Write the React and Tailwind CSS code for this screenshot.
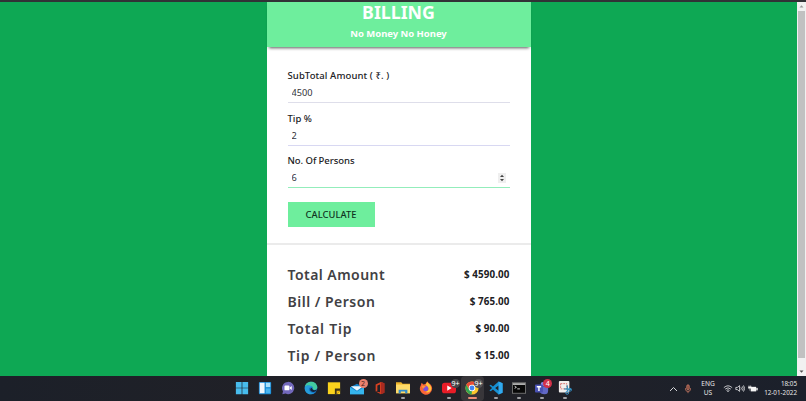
import React, { useState } from 'react';

//=================================================================
// 1. Main page
//=================================================================
function App() {
  return (
    <div className="flex h-[401px] w-[806px] flex-col overflow-hidden bg-[#0ea854] font-['Noto_Sans','Open_Sans',sans-serif]">
      <div className="h-[2px] shrink-0 bg-[#313236]" />
      <div className="flex h-[374px] shrink-0">
        <main className="flex flex-1 justify-center">
          <BillCard />
        </main>
        <Scrollbar />
      </div>
      <Taskbar />
    </div>
  );
}

//=================================================================
// 2. Bill calculator
//=================================================================
function BillCard() {
  const [amount, setAmount] = useState('4500');
  const [tip, setTip] = useState('2');
  const [persons, setPersons] = useState('6');
  const [result, setResult] = useState({ bill: 4500, tip: 90, persons: 6 });

  const calculate = (e) => {
    e.preventDefault();
    const bill = Number(amount);
    setResult({ bill, tip: (bill * Number(tip)) / 100, persons: Number(persons) || 1 });
  };

  const total = result.bill + result.tip;
  const rows = [
    { name: 'Total Amount', value: total, style: 'tracking-[0.45px]' },
    { name: 'Bill / Person', value: total / result.persons, style: 'tracking-[0.5px]' },
    { name: 'Total Tip', value: result.tip, style: 'tracking-[0.78px]' },
    { name: 'Tip / Person', value: result.tip / result.persons, style: 'tracking-[0.65px]' },
  ];

  return (
    <div className="h-full w-[264px] bg-white">
      <header className="flex h-[45px] flex-col items-center bg-[#6eee9d] text-white shadow-[0_3px_3px_-2px_rgba(0,0,0,0.65)]">
        <h1 className="text-[17.8px] leading-[20px] font-bold">BILLING</h1>
        <p className="mt-[5px] text-[9.5px] leading-[14px] font-bold tracking-[-0.03px]">No Money No Honey</p>
      </header>

      <form onSubmit={calculate} className="h-[198px] border-b-2 border-[#ebebeb] px-[21px] pt-[21px]">
        <Field
          label="SubTotal Amount ( ₹. )"
          value={amount}
          onChange={setAmount}
          line="bg-[#dedeea]"
          spacing="tracking-[0.1px]"
        />
        <Field label="Tip %" value={tip} onChange={setTip} line="bg-[#d8d8f2]" spacing="tracking-[0px]" />
        <Field
          label="No. Of Persons"
          value={persons}
          onChange={setPersons}
          line="bg-[#93edbb]"
          spacing="tracking-[-0.06px]"
          spinner
        />
        <button
          type="submit"
          className="mt-[6.5px] block h-[25px] w-[87px] bg-[#6eee9d] pt-[1px] text-[9.3px] font-medium tracking-[0.05px] text-[#10331f]"
        >
          CALCULATE
        </button>
      </form>

      <div className="px-[21px] pt-[16px]">
        {rows.map((row) => (
          <div key={row.name} className="flex h-[27.1px] items-center justify-between">
            <span className={`text-[14px] font-semibold text-[#414144] ${row.style}`}>{row.name}</span>
            <span className="pt-[2px] text-[9.8px] font-bold tracking-[0.11px] text-[#202023]">
              $ {row.value.toFixed(2)}
            </span>
          </div>
        ))}
      </div>
    </div>
  );
}

function Field({ label, value, onChange, line, spacing, spinner }) {
  return (
    <label className="block h-[42.5px]">
      <span className={`block text-[9.5px] leading-[16px] font-medium text-[#202023] ${spacing}`}>{label}</span>
      <span className="flex h-[18px] items-center px-[4px]">
        <input
          type="text"
          value={value}
          onChange={(e) => onChange(e.target.value)}
          className="min-w-0 flex-1 bg-transparent text-[9.2px] leading-[14px] text-[#33333a] outline-none"
        />
        {spinner && (
          <svg viewBox="0 0 8 10" className="h-[10px] w-[8px]">
            <rect width="8" height="10" fill="#efefef" />
            <path d="M2 4 4 1.8 6 4zM2 6 4 8.2 6 6z" fill="#444" />
          </svg>
        )}
      </span>
      <span className={`block h-[1px] ${line}`} />
    </label>
  );
}

function Scrollbar() {
  return (
    <div className="flex w-[9px] flex-col items-center bg-[#f1f1f1]">
      <svg viewBox="0 0 9 9" className="h-[9px] w-[9px]">
        <path d="M2.5 5.5 4.5 3.3 6.5 5.5z" fill="#999" />
      </svg>
      <div className="h-[347px] w-[7px] bg-[#c1c1c1]" />
      <svg viewBox="0 0 9 9" className="mt-auto h-[9px] w-[9px]">
        <path d="M2.5 3.5 4.5 5.8 6.5 3.5z" fill="#505050" />
      </svg>
    </div>
  );
}

//=================================================================
// 3. Windows taskbar
//=================================================================
function Taskbar() {
  return (
    <footer className="flex h-[25px] shrink-0 items-center bg-gradient-to-r from-[#1c2029] via-[#222126] to-[#1b202b] text-[#e8e8e8]">
      <div className="ml-[230px] flex h-full">
        {apps.map((app) => (
          <div
            key={app.name}
            title={app.name}
            className={`relative flex h-full w-[23.1px] items-center justify-center pb-[1px] ${app.active ? 'rounded bg-[#38363a]' : ''}`}
          >
            <svg viewBox="0 0 16 16" className="h-[14px] w-[14px]">{app.icon}</svg>
            {app.badge && (
              <span className={`absolute top-[3px] right-[1px] flex h-[9px] min-w-[9px] items-center justify-center rounded-full text-[7px] leading-none ${app.badgeStyle}`}>
                {app.badge}
              </span>
            )}
            {app.open && <i className="absolute bottom-[2px] h-[2px] w-[4px] rounded bg-[#a0a0a4]" />}
            {app.active && <i className="absolute bottom-[2px] h-[2px] w-[9px] rounded bg-[#ef8e75]" />}
          </div>
        ))}
      </div>

      <div className="ml-auto flex items-center pr-[9px]">
        <svg viewBox="0 0 9 8" className="h-[8px] w-[9px]" fill="none" stroke="#d5d5d8">
          <path d="M1 6 4.5 2.5 8 6" />
        </svg>
        <svg viewBox="0 0 8 12" className="ml-[6px] h-[10px] w-[8px]" fill="none" stroke="#c1745f">
          <rect x="2.5" y="1" width="3" height="6" rx="1.5" fill="#8b5042" />
          <path d="M1 5v1a3 3 0 0 0 6 0V5M4 9v2" />
        </svg>
        <div className="ml-[9px] flex w-[14px] flex-col items-center text-[6.6px] leading-[8.5px]">
          <span>ENG</span>
          <span>US</span>
        </div>
        <svg viewBox="0 0 12 10" className="ml-[8px] h-[9px] w-[10px]" fill="none" stroke="#e0e0e2">
          <path d="M1 4Q6-.5 11 4M2.6 5.7Q6 2.7 9.4 5.7M4.2 7.3Q6 5.7 7.8 7.3" />
          <circle cx="6" cy="8.5" r=".8" fill="#e0e0e2" stroke="none" />
        </svg>
        <svg viewBox="0 0 12 10" className="ml-[2px] h-[9px] w-[10px]" fill="none" stroke="#e0e0e2">
          <path d="M1 3.7h1.8L5.5 1.5v7L2.8 6.3H1zM7.2 3.7q1 1.3 0 2.6M8.8 2.5q2 2.5 0 5M10.2 1.3q2.8 3.7 0 7.4" />
        </svg>
        <svg viewBox="0 0 12 10" className="ml-[3px] h-[9px] w-[10px]">
          <path d="M3.3 3h6.5v5.5H3.3z" fill="#f4f4f4" />
          <path d="M10.3 4.5h1v2.5h-1zM1.2 1.2v2M3.2 1.2v2M.5 3h3.4v1.8H.5zM2.2 5v2.5" fill="#f4f4f4" stroke="#f4f4f4" strokeWidth=".6" />
        </svg>
        <div className="ml-[6px] flex w-[33px] flex-col items-end text-[6.3px] leading-[8.5px] whitespace-nowrap">
          <span>18:05</span>
          <span>12-01-2022</span>
        </div>
      </div>
    </footer>
  );
}

const apps = [
  {
    name: 'Start',
    icon: <path d="M1 1h6.6v6.6H1zM8.4 1H15v6.6H8.4zM1 8.4h6.6V15H1zM8.4 8.4H15V15H8.4z" fill="#48bced" />,
  },
  {
    name: 'Widgets',
    icon: (
      <>
        <rect x="1" y="1" width="14" height="14" rx="1" fill="#188bd5" />
        <path d="M2 2h5.5v12H2z" fill="#f0f7fc" />
        <path d="M9 2h5v5H9z" fill="#a8e0fa" />
        <path d="M9 8.5h5V14H9z" fill="#49b4ef" />
      </>
    ),
  },
  {
    name: 'Chat',
    icon: (
      <>
        <path d="M8 1a7 7 0 1 1-2.7 13.4L1.5 15l.8-3.2A7 7 0 0 1 8 1z" fill="#7268bb" />
        <rect x="4" y="5.2" width="5.6" height="5.5" rx="1" fill="#fff" />
        <path d="m10 7.3 2.3-1.6v4.5L10 8.7z" fill="#fff" />
      </>
    ),
  },
  {
    name: 'Edge',
    icon: (
      <>
        <circle cx="8" cy="8" r="7.2" fill="#1676c6" />
        <path d="M1 7C2-.5 14-1.5 15.2 7c.2 3-3.7 4.2-5.5 2.5C11 7.3 9.2 5.5 7 5.7 4.5 5 2.2 5.5 1 7z" fill="#43cba0" />
        <path d="M1 7c2-3.2 7-2.7 8.6.5C6.8 6.3 5 8 5.6 10c.7 2.7 3.3 4 6.2 3.8C5.7 17.5-.2 13 1 7z" fill="#269cda" />
        <path d="M9.7 9.5c1.4 1.4 3.7 1.4 5 .3-.5 2.5-4.3 3.6-6.5 1.9-1.6-1.2-1.4-3 .5-4z" fill="#15243a" />
      </>
    ),
  },
  {
    name: 'Sticky Notes',
    icon: (
      <>
        <path d="M1 1.5h14V15H1z" fill="#fbd31d" />
        <path d="M9 8.5h6V11l-4 4H9z" fill="#3d3518" />
        <path d="M11 11h4l-4 4z" fill="#f5b915" />
      </>
    ),
  },
  {
    name: 'Mail',
    badge: '2',
    badgeStyle: 'bg-[#eb826f] text-[#45201c]',
    icon: (
      <>
        <path d="m0 7 8-4 8 4v8H0z" fill="#1582ca" />
        <path d="M1 6h14L8 11z" fill="#eef8ff" />
        <path d="m0 7 8 5 8-5v8H0z" fill="#35b5ee" />
      </>
    ),
  },
  {
    name: 'Office',
    icon: (
      <>
        <path d="m3 4 6-3 4 1.5v11L9 15l-6-3 5 .8V4L5 5v6l-2 1z" fill="#d84121" />
        <path d="M9 1l4 1.5v11L9 15z" fill="#a92a20" />
      </>
    ),
  },
  {
    name: 'Explorer',
    open: true,
    icon: (
      <>
        <path d="M0 1.5h6L7.5 3H16v11H0z" fill="#f0b429" />
        <path d="M0 4h16v10H0z" fill="#ffdb69" />
        <path d="M3 14v-4h10v4h-2.5v-2h-5v2z" fill="#308ccc" />
      </>
    ),
  },
  {
    name: 'Firefox',
    icon: (
      <>
        <path d="M2 5 3 2l2 2 2.5-.7C8.2 1.8 9 1 10 .7c0 1.8 5 3 5 8A7 7 0 1 1 2 5z" fill="#fa6637" />
        <path d="M10 1c0 2 4.5 3.3 4 8-.4 3.5-4.3 5-7 3.3 4 .4 5.2-4 2.2-6.2L7.5 3.7z" fill="#ffc53b" />
        <circle cx="7.6" cy="8.6" r="3" fill="#8052d8" />
        <path d="M3 6c2-1.2 3 0 5 .4C6.5 8 5.3 7.3 5 9z" fill="#ff943b" />
      </>
    ),
  },
  {
    name: 'YouTube',
    open: true,
    badge: '9+',
    badgeStyle: 'bg-[#47474a] text-white',
    icon: (
      <>
        <rect y="2" width="16" height="12" rx="3" fill="#e91c27" />
        <path d="m6 5 5 3-5 3z" fill="#fff" />
      </>
    ),
  },
  {
    name: 'Chrome',
    active: true,
    badge: '9+',
    badgeStyle: 'bg-[#555257] text-white',
    icon: (
      <>
        <circle cx="8" cy="8" r="7.5" fill="#fbc72c" />
        <path d="M1.5 4.3A7.5 7.5 0 0 1 14.5 4.3H8L5 9.7z" fill="#e84b38" />
        <path d="M1.5 4.3 4.8 10 8 11.5 7.5 15.5A7.5 7.5 0 0 1 1.5 4.3z" fill="#34a553" />
        <circle cx="8" cy="8" r="3.7" fill="#fff" />
        <circle cx="8" cy="8" r="2.8" fill="#4285f4" />
      </>
    ),
  },
  {
    name: 'VS Code',
    open: true,
    icon: (
      <>
        <path d="m11 .5 4.5 2v11l-4.5 2L4.5 9.7 2 11.7.5 10.9 3.5 8 .5 5.1 2 4.3l2.5 2zM11 5 7 8l4 3z" fill="#168fd3" fillRule="evenodd" />
        <path d="m11 .5 4.5 2v11l-4.5 2z" fill="#32a9ee" />
      </>
    ),
  },
  {
    name: 'Terminal',
    open: true,
    icon: (
      <>
        <rect x=".5" y="2" width="15" height="12" fill="#080808" stroke="#777" />
        <path d="M1 2.5h14v2H1z" fill="#bababa" />
        <path d="m3 6 2 1.2-2 1.2M6 9h3" stroke="#e8e8e8" fill="none" />
      </>
    ),
  },
  {
    name: 'Teams',
    open: true,
    badge: '4',
    badgeStyle: 'bg-[#d23149] text-white',
    icon: (
      <>
        <circle cx="9" cy="3.5" r="2.5" fill="#7f87e8" />
        <path d="M5 6h10v5a4 4 0 0 1-4 4q-5 0-6-4z" fill="#6168c5" />
        <rect x="0" y="4" width="9" height="9" rx="1" fill="#4951b3" />
        <path d="M2 5.8h5v1.5H5.3v4H3.7v-4H2z" fill="#fff" />
      </>
    ),
  },
  {
    name: 'Snipping Tool',
    open: true,
    icon: (
      <>
        <rect x="1" y="0" width="12" height="13" rx="1" fill="#f2efed" />
        <path d="M3 3h7v6H3z" fill="none" stroke="#d86862" strokeDasharray="2 1" />
        <path d="m10.5 5 .5 7M7 9l8 .5" stroke="#3f8fb8" strokeWidth="1.6" />
        <circle cx="10.5" cy="13.5" r="1.7" fill="none" stroke="#3296d1" />
        <circle cx="14" cy="10" r="1.5" fill="none" stroke="#3296d1" />
      </>
    ),
  },
];

export default App;
